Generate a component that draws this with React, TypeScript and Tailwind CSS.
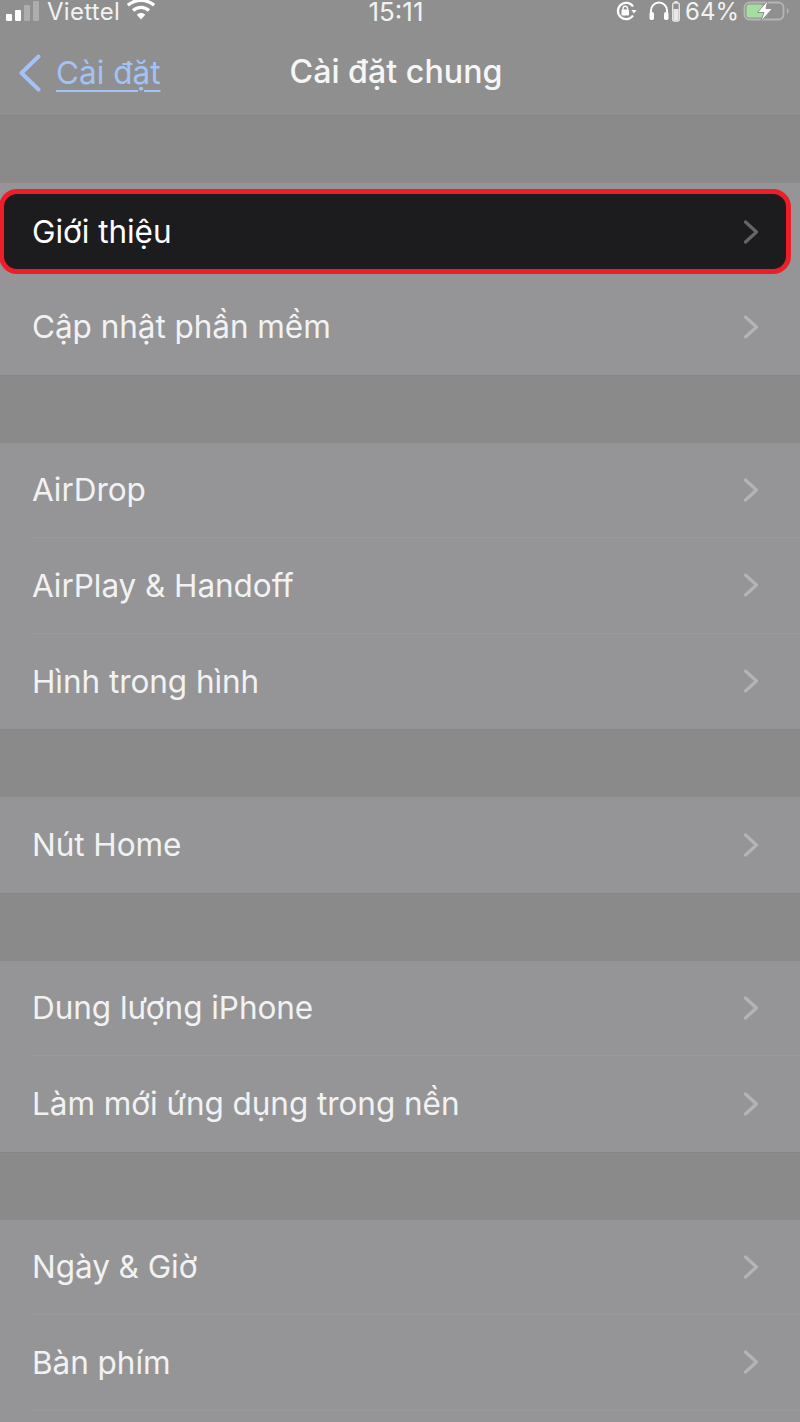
import React from "react";

const font = { fontFamily: '"Inter", "Noto Sans", "Liberation Sans", sans-serif' };

function Chevron({ dark }: { dark?: boolean }) {
  return (
    <svg width="16" height="24" viewBox="0 0 16 24" fill="none" className="shrink-0">
      <path d="M2.5 2 L13.5 12 L2.5 22" stroke={dark ? "#66666a" : "#b4b4b6"} strokeWidth="3.2" strokeLinecap="round" strokeLinejoin="round" />
    </svg>
  );
}

function Row({ label, last }: { label: string; last?: boolean }) {
  return (
    <div className="h-[95.5px] pl-[32px] flex">
      <div className={`flex-1 flex items-center justify-between pr-[41px] ${last ? "" : "border-b border-[#9a9a9c]"}`}>
        <span className="text-[31.5px] tracking-[-0.05px] text-[#f2f2f3] leading-none">{label}</span>
        <Chevron />
      </div>
    </div>
  );
}

function Group({ items, open }: { items: string[]; open?: boolean }) {
  return (
    <div className={`bg-[#959597] ${open ? "flex-1" : "shrink-0"}`}>
      {items.map((t, i) => (
        <Row key={t} label={t} last={i === items.length - 1 && !open} />
      ))}
    </div>
  );
}

function Gap() {
  return <div className="h-[68px] shrink-0 bg-[#8a8a8a] border-t border-[#868686]" />;
}

function StatusBar() {
  return (
    <div className="h-[22px] grid grid-cols-[1fr_auto_1fr] items-center text-[#f2f2f2] leading-[22px]">
      <div className="flex items-center pl-[6px]">
        <div className="flex items-end gap-[3px] h-[20px]">
          <div className="w-[6px] h-[7px] bg-white rounded-[1px]" />
          <div className="w-[6px] h-[11px] bg-white rounded-[1px]" />
          <div className="w-[6px] h-[16px] bg-[#adadad] rounded-[1px]" />
          <div className="w-[6px] h-[20px] bg-[#adadad] rounded-[1px]" />
        </div>
        <span className="ml-[8px] text-[24px] tracking-[0.3px] translate-y-[1px]">Viettel</span>
        <svg width="30" height="21" viewBox="0 0 32 22" fill="none" className="ml-[6px] -mt-[2px]">
          <path d="M2 5.5 C10 -1.5 22 -1.5 30 5.5" stroke="#fff" strokeWidth="3.6" />
          <path d="M7.5 11 C12.5 6.5 19.5 6.5 24.5 11" stroke="#fff" strokeWidth="3.6" />
          <path d="M11.5 15.5 L16 20.5 L20.5 15.5 C18 13 14 13 11.5 15.5 Z" fill="#fff" />
        </svg>
      </div>
      <span className="text-[26px] -translate-x-[4px] translate-y-[1px]">15:11</span>
      <div className="flex items-center justify-end pr-[10px]">
        <svg width="22" height="20" viewBox="0 0 22 20" fill="none">
          <path d="M18 14.5 A8.2 8.2 0 1 1 18 5.5" stroke="#fff" strokeWidth="2.2" />
          <path d="M16.5 9 L21.5 9 L19 12.5 Z" fill="#fff" />
          <rect x="6.5" y="8.5" width="7.5" height="6" rx="1" fill="#fff" />
          <path d="M8 9 V7 a2.3 2.3 0 0 1 4.5 0 V9" stroke="#fff" strokeWidth="1.4" />
        </svg>
        <svg width="20" height="20" viewBox="0 0 20 20" fill="none" className="ml-[12px]">
          <path d="M2 14 V9.5 a8 8 0 0 1 16 0 V14" stroke="#fff" strokeWidth="2" />
          <rect x="0.5" y="11" width="4.5" height="8" rx="1.8" fill="#fff" />
          <rect x="15" y="11" width="4.5" height="8" rx="1.8" fill="#fff" />
        </svg>
        <svg width="8" height="21" viewBox="0 0 8 21" className="ml-[3px]">
          <rect x="2.5" y="0" width="3" height="2" fill="#e8e8e8" />
          <rect x="0.7" y="2" width="6.6" height="18" rx="1.5" fill="none" stroke="#e8e8e8" strokeWidth="1.3" />
          <rect x="1.5" y="8" width="5" height="11.5" fill="#e8e8e8" />
        </svg>
        <span className="ml-[5px] text-[24px] translate-y-[1px]">64%</span>
        <svg width="47" height="22" viewBox="0 0 47 22" fill="none" className="ml-[4px]">
          <rect x="1.5" y="2.5" width="39" height="17" rx="5" stroke="#b5b5b5" strokeWidth="1.8" />
          <rect x="3.5" y="4.5" width="17" height="13" rx="2.5" fill="#a5dfa0" />
          <path d="M44 8 C46 9 46 13 44 14 Z" fill="#b5b5b5" />
          <path d="M25 0 L14.5 12.5 L21 12.5 L17.5 22 L29.5 8.5 L23 8.5 Z" fill="#fff" stroke="#8f8f8f" strokeWidth="1" />
        </svg>
      </div>
    </div>
  );
}

function NavBar() {
  return (
    <div className="flex-1 grid grid-cols-[1fr_auto_1fr] items-center pt-[8px]">
      <div className="flex items-center pl-[18px] text-[#a3c2f5]">
        <svg width="23" height="38" viewBox="0 0 23 38" fill="none">
          <path d="M20.5 2.5 L3.5 19 L20.5 35.5" stroke="#a3c2f5" strokeWidth="4" strokeLinecap="round" strokeLinejoin="round" />
        </svg>
        <span className="ml-[15px] text-[31.5px] leading-none underline underline-offset-[6px] decoration-[2px]">Cài đặt</span>
      </div>
      <span className="text-[32.2px] leading-none font-medium text-[#f6f6f6] -translate-x-[4px]">Cài đặt chung</span>
      <div />
    </div>
  );
}

export default function App() {
  return (
    <div style={font} className="w-[800px] h-[1422px] overflow-hidden flex flex-col bg-[#8e8e8e]">
      <div className="h-[115px] shrink-0 flex flex-col bg-[#8f8f8f]">
        <StatusBar />
        <NavBar />
      </div>
      <Gap />
      <div className="bg-[#959597] shrink-0">
        <div className="h-[96px] pt-[6px] pr-[9px]">
          <div className="h-[85px] bg-[#1c1c1e] border-[5px] border-[#ee1d2a] rounded-[18px] flex items-center justify-between pl-[28px] pr-[27px] -ml-[1px]">
            <span className="text-[31.5px] tracking-[-0.05px] text-white leading-none">Giới thiệu</span>
            <Chevron dark />
          </div>
        </div>
        <Row label="Cập nhật phần mềm" last />
      </div>
      <Gap />
      <Group items={["AirDrop", "AirPlay & Handoff", "Hình trong hình"]} />
      <Gap />
      <Group items={["Nút Home"]} />
      <Gap />
      <Group items={["Dung lượng iPhone", "Làm mới ứng dụng trong nền"]} />
      <Gap />
      <Group items={["Ngày & Giờ", "Bàn phím"]} open />
    </div>
  );
}
